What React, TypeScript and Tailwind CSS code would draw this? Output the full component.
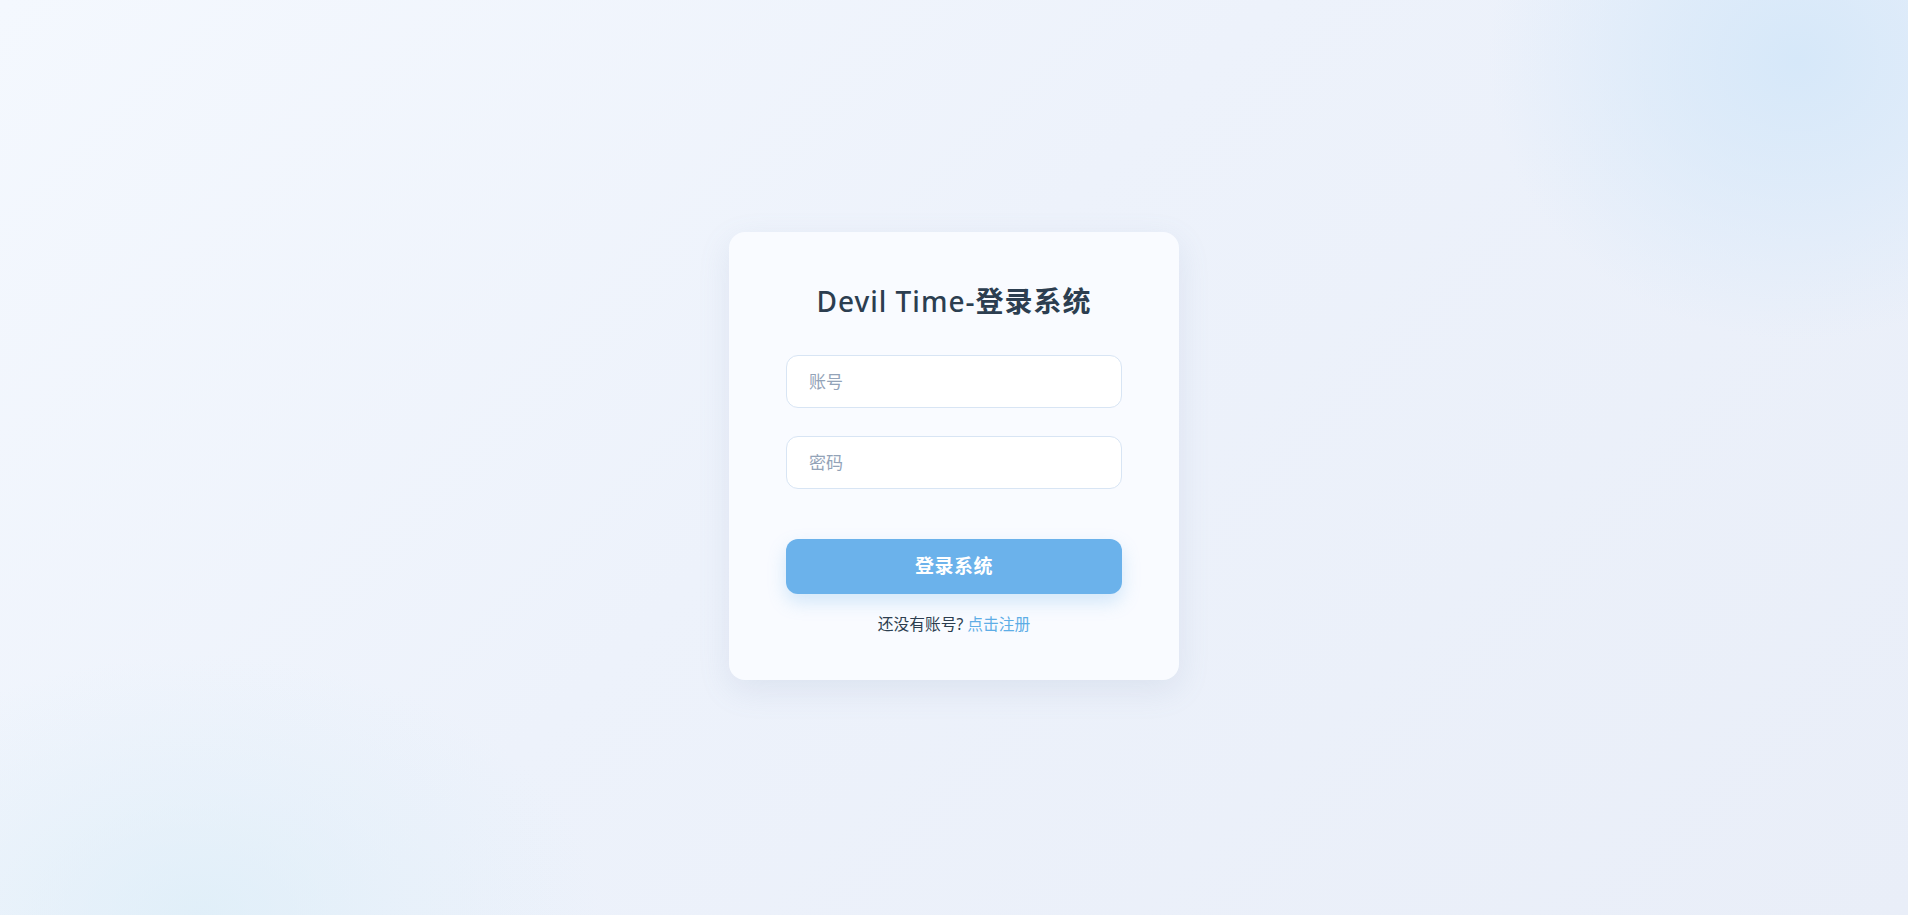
export default function App() {
  return (
    <div className="relative min-h-screen w-full overflow-hidden bg-[linear-gradient(135deg,#f4f8fe_0%,#edf2fb_45%,#e9eef8_100%)] flex items-center justify-center pb-[4px] font-['Noto_Sans','Noto_Sans_CJK_SC',sans-serif]">
      {/* background tints */}
      <div className="pointer-events-none absolute -right-[200px] -top-[220px] w-[620px] h-[560px] rounded-full bg-[radial-gradient(closest-side,#d6e8f9_0%,rgba(214,232,249,0.6)_45%,rgba(214,232,249,0)_100%)]" />
      <div className="pointer-events-none absolute -left-[200px] -bottom-[260px] w-[800px] h-[520px] rounded-full bg-[radial-gradient(closest-side,rgba(221,238,248,0.8)_0%,rgba(221,238,248,0.35)_50%,rgba(221,238,248,0)_100%)]" />

      <div className="relative w-[450px] rounded-2xl bg-[#f9fbff] px-[57px] pt-[48px] pb-[44px] shadow-[0_10px_32px_rgba(120,140,180,0.14)]">
        <h1 className="text-center text-[28px] leading-[42px] font-semibold tracking-[1px] text-[#2c3e50] mb-[33px]">
          <span className="font-medium">Devil Time-</span>登录系统
        </h1>

        <input
          type="text"
          placeholder="账号"
          className="block w-full h-[53px] rounded-xl border border-[#d8e5f4] bg-white px-[22px] text-[17px] text-[#2c3e50] placeholder:text-[#93a3b8] outline-none"
        />
        <input
          type="password"
          placeholder="密码"
          className="mt-[28px] block w-full h-[53px] rounded-xl border border-[#d8e5f4] bg-white px-[22px] text-[17px] text-[#2c3e50] placeholder:text-[#93a3b8] outline-none"
        />

        <button className="mt-[50px] block w-full h-[55px] rounded-xl bg-[#6bb2eb] text-white text-[19px] font-bold tracking-[0.5px] shadow-[0_8px_18px_rgba(107,178,235,0.28)]">
          登录系统
        </button>

        <p className="mt-[18px] text-center text-[15.75px] leading-[24px] text-[#2c3e50]">
          还没有账号? <span className="text-[#5eade6] cursor-pointer">点击注册</span>
        </p>
      </div>
    </div>
  );
}
